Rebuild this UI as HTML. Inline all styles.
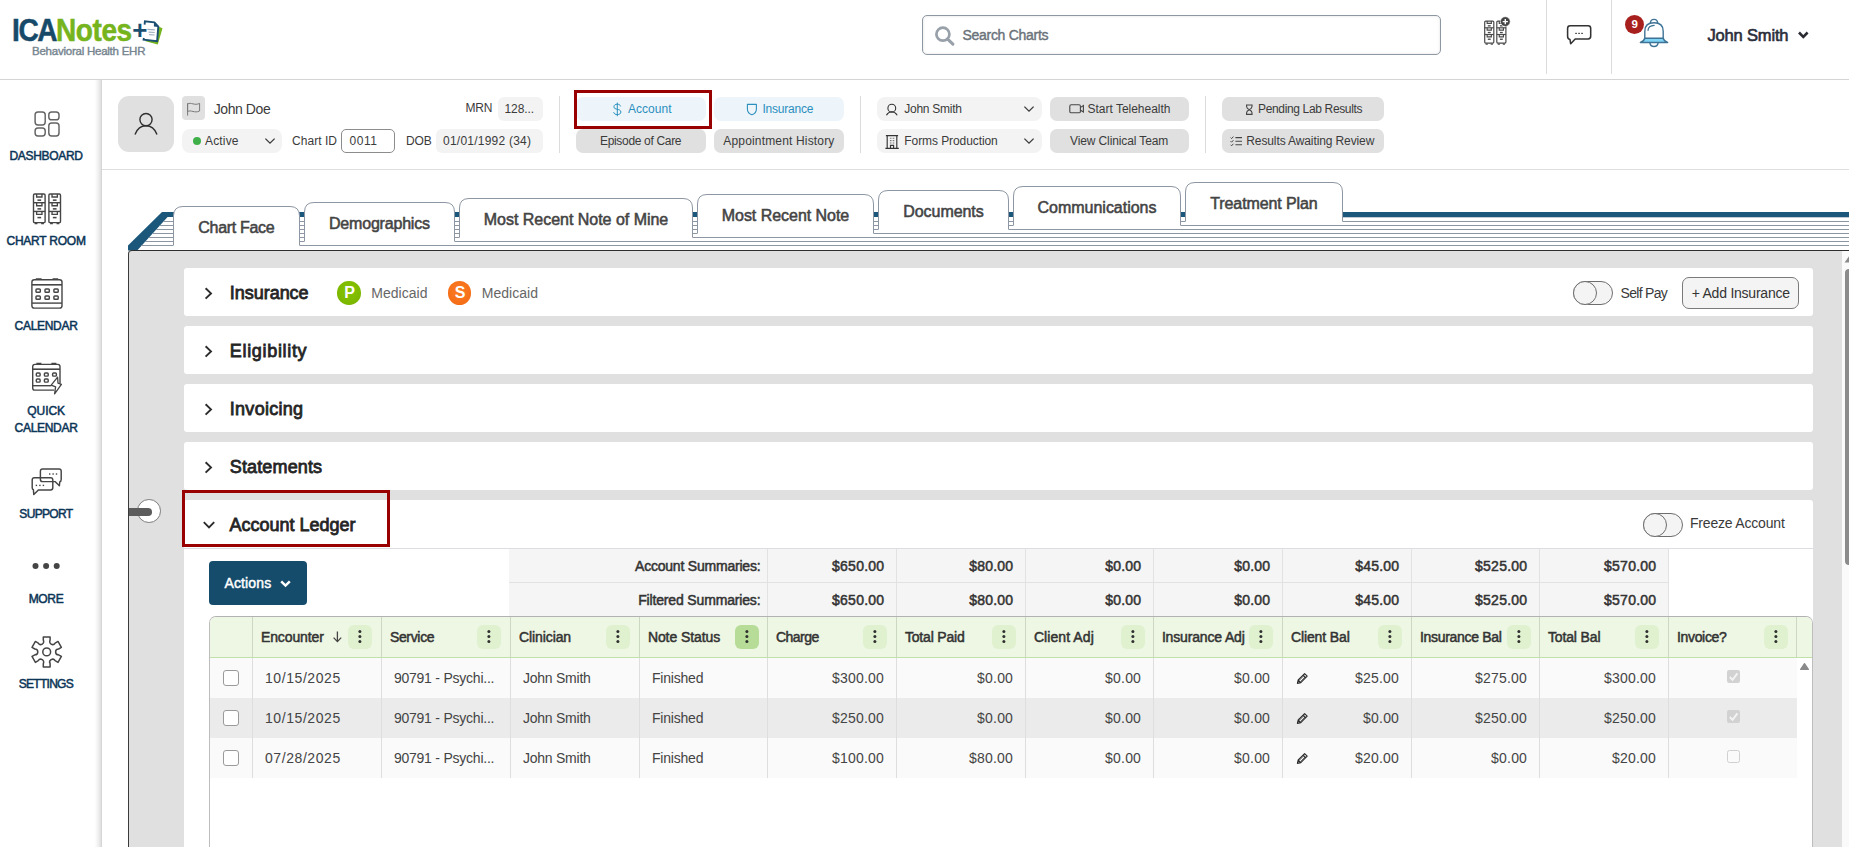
<!DOCTYPE html>
<html lang="en"><head><meta charset="utf-8"><title>ICANotes - Account Ledger</title>
<style>
html,body{margin:0;padding:0;}
body{width:1849px;height:847px;overflow:hidden;background:#fff;position:relative;font-family:"Liberation Sans",sans-serif;}
.b{position:absolute;box-sizing:border-box;}
.t{position:absolute;white-space:nowrap;font-family:"Liberation Sans",sans-serif;}
svg{overflow:visible;}
</style></head><body>
<header>
<div class="b" style="left:0px;top:79px;width:1849px;height:1px;background:#d4d4d4;"></div>
<span class="t" style="left:11.60px;top:15.18px;font-size:30.5px;line-height:30.5px;font-weight:700;color:#174a69;letter-spacing:-1.481px;-webkit-text-stroke:.5px #174a69;transform:scaleX(0.92);transform-origin:0 0;">ICA</span>
<span class="t" style="left:56.40px;top:15.18px;font-size:30.5px;line-height:30.5px;font-weight:700;color:#76b41d;letter-spacing:-0.479px;-webkit-text-stroke:.5px #76b41d;transform:scaleX(0.92);transform-origin:0 0;">Notes</span>
<svg class="b" style="left:0px;top:0px;" width="180" height="60" viewBox="0 0 180 60">
<path d="M158.3 26.6 L162.5 28.2 L157.8 44.6 L145.6 41.3 L146 39.6 L157 41 Z" fill="#76b41d"/>
<path d="M144.6 24.6 L144.9 21.4 L154.4 22.3 L158.3 26.7 L157.1 41.1 L143.6 39.6 L143.9 38" fill="#fff" stroke="#1a4f72" stroke-width="1.9" stroke-linejoin="miter"/>
<path d="M154 22 L158.6 27 L153.9 26.6 Z" fill="#1a4f72"/>
<path d="M147.4 29.4 L154.8 29.9 M148.6 32.1 L154.7 32.5 M149.1 34.6 L154.6 35" stroke="#9fb0c0" stroke-width="1.1"/>
</svg>
<span class="t" style="left:132.30px;top:16.89px;font-size:26px;line-height:26px;font-weight:700;color:#1a4f72;letter-spacing:0.016px;">+</span>
<span class="t" style="left:32.00px;top:46.37px;font-size:11.5px;line-height:11.5px;color:#76858f;letter-spacing:-0.238px;-webkit-text-stroke:0.4px #76858f;">Behavioral Health EHR</span>
<div class="b" style="left:922px;top:15px;width:519px;height:40px;border:1px solid #8d98a3;border-radius:5px;background:#fff;box-shadow:inset 0 0 3px rgba(0,0,0,.12);"></div>
<svg class="b" style="left:934px;top:25px;" width="22" height="22" viewBox="0 0 22 22"><circle cx="8.9" cy="9.2" r="6.5" fill="none" stroke="#98a0a9" stroke-width="2.7"/><path d="M13.9 14.3 L18.9 19.1" stroke="#98a0a9" stroke-width="3.1" stroke-linecap="round"/></svg>
<span class="t" style="left:962.50px;top:27.95px;font-size:14px;line-height:14px;color:#6a727a;letter-spacing:-0.290px;-webkit-text-stroke:0.4px #6a727a;">Search Charts</span>
<svg class="b" style="left:1476px;top:8px;" width="50" height="46" viewBox="0 0 50 46"><rect x="8.7" y="13.1" width="9.1" height="22.0" rx="1" fill="none" stroke="#4a4a4a" stroke-width="1.2"/><path d="M11.157 13.1 V15.41 H15.343 V13.1" fill="none" stroke="#4a4a4a" stroke-width="1.14"/><path d="M11.794 17.83 H14.706" stroke="#4a4a4a" stroke-width="1.32"/><path d="M8.7 19.81 H17.799999999999997" stroke="#4a4a4a" stroke-width="1.2"/><path d="M11.157 19.81 V22.119999999999997 H15.343 V19.81" fill="none" stroke="#4a4a4a" stroke-width="1.14"/><path d="M11.794 24.54 H14.706" stroke="#4a4a4a" stroke-width="1.32"/><path d="M8.7 26.52 H17.799999999999997" stroke="#4a4a4a" stroke-width="1.2"/><path d="M11.157 26.52 V28.83 H15.343 V26.52" fill="none" stroke="#4a4a4a" stroke-width="1.14"/><path d="M11.794 31.25 H14.706" stroke="#4a4a4a" stroke-width="1.32"/><path d="M9.61 36.1 h2.1839999999999997 M14.706 36.1 h2.1839999999999997" stroke="#4a4a4a" stroke-width="1.08"/><rect x="20.8" y="13.1" width="9.1" height="22.0" rx="1" fill="none" stroke="#4a4a4a" stroke-width="1.2"/><path d="M23.257 13.1 V15.41 H27.443 V13.1" fill="none" stroke="#4a4a4a" stroke-width="1.14"/><path d="M23.894000000000002 17.83 H26.806" stroke="#4a4a4a" stroke-width="1.32"/><path d="M20.8 19.81 H29.9" stroke="#4a4a4a" stroke-width="1.2"/><path d="M23.257 19.81 V22.119999999999997 H27.443 V19.81" fill="none" stroke="#4a4a4a" stroke-width="1.14"/><path d="M23.894000000000002 24.54 H26.806" stroke="#4a4a4a" stroke-width="1.32"/><path d="M20.8 26.52 H29.9" stroke="#4a4a4a" stroke-width="1.2"/><path d="M23.257 26.52 V28.83 H27.443 V26.52" fill="none" stroke="#4a4a4a" stroke-width="1.14"/><path d="M23.894000000000002 31.25 H26.806" stroke="#4a4a4a" stroke-width="1.32"/><path d="M21.71 36.1 h2.1839999999999997 M26.806 36.1 h2.1839999999999997" stroke="#4a4a4a" stroke-width="1.08"/><circle cx="29.3" cy="13.6" r="4.9" fill="#444" stroke="#fff" stroke-width="0.6"/><path d="M26.7 13.6 H31.9 M29.3 11 V16.2" stroke="#fff" stroke-width="1.4"/></svg>
<div class="b" style="left:1546px;top:0px;width:1px;height:74px;background:#dcdcdc;"></div>
<svg class="b" style="left:0px;top:0px;" width="1849" height="60" viewBox="0 0 1849 60"><path d="M1570.2 25.8 H1588.1 Q1590.7 25.8 1590.7 28.4 V36.3 Q1590.7 38.9 1588.1 38.9 H1575.2 L1570.7 43.8 L1570 39.6 Q1567.6 39 1567.6 36.3 V28.4 Q1567.6 25.8 1570.2 25.8 Z" fill="none" stroke="#333" stroke-width="1.55" stroke-linejoin="round"/><g fill="#333"><rect x="1575.3" y="32.8" width="1.5" height="1.2"/><rect x="1578.3" y="32.8" width="1.5" height="1.2"/><rect x="1581.3" y="32.8" width="1.5" height="1.2"/></g></svg>
<div class="b" style="left:1611px;top:0px;width:1px;height:74px;background:#dcdcdc;"></div>
<svg class="b" style="left:0px;top:0px;" width="1849" height="60" viewBox="0 0 1849 60"><g fill="none" stroke="#3f7396" stroke-width="1.4" stroke-linejoin="round" stroke-linecap="round">
<path d="M1644.8 38.2 H1663.2 C1663.8 40.4 1665.4 41.7 1667.6 42.5 H1640.4 C1642.6 41.7 1644.2 40.4 1644.8 38.2 Z" fill="#7fd3f4"/>
<path d="M1644.8 38.2 V31.2 C1644.8 25.6 1648.6 22.8 1654 22.8 C1659.4 22.8 1663.2 25.6 1663.2 31.2 V38.2"/>
<path d="M1650.4 23.3 C1650.4 20.5 1652 19.4 1654 19.4 C1656 19.4 1657.6 20.5 1657.6 23.3"/>
<path d="M1649.9 42.6 C1650.2 45.4 1651.8 46.5 1654 46.5 C1656.2 46.5 1657.8 45.4 1658.1 42.6"/>
<path d="M1648 30.4 C1648.2 27.6 1650.6 25.6 1654.2 25.4" stroke-width="1.2"/>
</g></svg>
<div class="b" style="left:1625px;top:14.8px;width:19px;height:19px;background:#a8201e;border-radius:50%;"></div>
<span class="t" style="left:1631.40px;top:19.17px;font-size:11.5px;line-height:11.5px;font-weight:700;color:#fff;letter-spacing:0.004px;">9</span>
<span class="t" style="left:1707.50px;top:26.83px;font-size:16.5px;line-height:16.5px;color:#2a2d3a;letter-spacing:-0.171px;-webkit-text-stroke:0.6px #2a2d3a;">John Smith</span>
<svg class="b" style="left:1797px;top:30px;" width="13" height="10" viewBox="0 0 13 10"><path d="M2 2.5 L6.3 6.8 L10.6 2.5" fill="none" stroke="#2a2b30" stroke-width="2.6"/></svg>
</header>
<nav>
<div class="b" style="left:0px;top:80px;width:102px;height:767px;background:linear-gradient(to right,#fff 0,#fff 94.5px,#fafafa 96px,#ececec 99px,#dedede 101px,#cecece 102px);"></div>
<svg class="b" style="left:0px;top:0px;" width="102" height="847" viewBox="0 0 102 847"><g fill="none" stroke="#636363" stroke-width="1.45"><rect x="35.1" y="111.9" width="10.1" height="13.1" rx="2.9"/><rect x="48.8" y="111.9" width="10.2" height="7.9" rx="2.9"/><rect x="35.1" y="128" width="10.1" height="7.9" rx="2.9"/><rect x="48.8" y="122.9" width="10.2" height="13" rx="2.9"/></g><rect x="33.5" y="194.0" width="11.6" height="28.6" rx="1.2" fill="none" stroke="#454545" stroke-width="1.4"/><path d="M36.632 194.0 V197.003 H41.968 V194.0" fill="none" stroke="#454545" stroke-width="1.3299999999999998"/><path d="M37.444 200.149 H41.156" stroke="#454545" stroke-width="1.54"/><path d="M33.5 202.723 H45.1" stroke="#454545" stroke-width="1.4"/><path d="M36.632 202.723 V205.726 H41.968 V202.723" fill="none" stroke="#454545" stroke-width="1.3299999999999998"/><path d="M37.444 208.872 H41.156" stroke="#454545" stroke-width="1.54"/><path d="M33.5 211.446 H45.1" stroke="#454545" stroke-width="1.4"/><path d="M36.632 211.446 V214.449 H41.968 V211.446" fill="none" stroke="#454545" stroke-width="1.3299999999999998"/><path d="M37.444 217.595 H41.156" stroke="#454545" stroke-width="1.54"/><path d="M34.66 223.7 h2.784 M41.156 223.7 h2.784" stroke="#454545" stroke-width="1.26"/><rect x="48.9" y="194.0" width="11.6" height="28.6" rx="1.2" fill="none" stroke="#454545" stroke-width="1.4"/><path d="M52.032 194.0 V197.003 H57.367999999999995 V194.0" fill="none" stroke="#454545" stroke-width="1.3299999999999998"/><path d="M52.844 200.149 H56.556" stroke="#454545" stroke-width="1.54"/><path d="M48.9 202.723 H60.5" stroke="#454545" stroke-width="1.4"/><path d="M52.032 202.723 V205.726 H57.367999999999995 V202.723" fill="none" stroke="#454545" stroke-width="1.3299999999999998"/><path d="M52.844 208.872 H56.556" stroke="#454545" stroke-width="1.54"/><path d="M48.9 211.446 H60.5" stroke="#454545" stroke-width="1.4"/><path d="M52.032 211.446 V214.449 H57.367999999999995 V211.446" fill="none" stroke="#454545" stroke-width="1.3299999999999998"/><path d="M52.844 217.595 H56.556" stroke="#454545" stroke-width="1.54"/><path d="M50.059999999999995 223.7 h2.784 M56.556 223.7 h2.784" stroke="#454545" stroke-width="1.26"/><g fill="none" stroke="#454545" stroke-width="1.4"><rect x="31.9" y="279.7" width="30.1" height="28.4" rx="2.4"/><path d="M31.9 284.8 H62" stroke-width="1.6"/><path d="M31.9 303.1 H62"/><path d="M35.8 278.9 H41.6 M52.6 278.9 H58.2" stroke-width="1.5"/><rect x="36.0" y="288.9" width="4.3" height="3.4" rx=".9" stroke-width="1.45"/><rect x="45.0" y="288.9" width="4.3" height="3.4" rx=".9" stroke-width="1.45"/><rect x="53.9" y="288.9" width="4.3" height="3.4" rx=".9" stroke-width="1.45"/><rect x="36.0" y="295.9" width="4.3" height="3.4" rx=".9" stroke-width="1.45"/><rect x="45.0" y="295.9" width="4.3" height="3.4" rx=".9" stroke-width="1.45"/><rect x="53.9" y="295.9" width="4.3" height="3.4" rx=".9" stroke-width="1.45"/></g><g fill="none" stroke="#454545" stroke-width="1.4"><path d="M54.2 390.1 H34.9 Q32.7 390.1 32.7 387.9 V366.6 Q32.7 364.4 34.9 364.4 H57.8 Q60 364.4 60 366.6 V383.6"/><path d="M32.7 369.2 H60" stroke-width="1.6"/><path d="M32.7 385.7 H51.4"/><path d="M36.4 363.6 H41.4 M51.4 363.6 H56.4" stroke-width="1.5"/><rect x="36.3" y="373.0" width="3.8" height="3.1" rx=".9" stroke-width="1.45"/><rect x="44.4" y="373.0" width="3.8" height="3.1" rx=".9" stroke-width="1.45"/><rect x="52.6" y="373.0" width="3.8" height="3.1" rx=".9" stroke-width="1.45"/><rect x="36.3" y="379.0" width="3.8" height="3.1" rx=".9" stroke-width="1.45"/><rect x="44.4" y="379.0" width="3.8" height="3.1" rx=".9" stroke-width="1.45"/><path d="M57.6 377.2 L51.2 385.2 L55.6 386.9 L54.6 393.9 L61.4 384.4 L58 383.2 Z" fill="#fff" stroke-linejoin="round" stroke-width="1.3"/></g><g fill="none" stroke="#454545" stroke-width="1.45" stroke-linejoin="round"><path d="M42.6 469 H59 Q61.2 469 61.2 471.2 V479.6 Q61.2 481.6 59.8 481.8 L59.4 485.8 L55 481.6 H42.6 Q40.4 481.6 40.4 479.4 V471.2 Q40.4 469 42.6 469 Z"/><path d="M34.4 477.7 H50.6 Q52.8 477.7 52.8 479.9 V487.7 Q52.8 489.9 50.6 489.9 H38.4 L33.8 494.6 L33.4 489.7 Q32.2 489.3 32.2 487.7 V479.9 Q32.2 477.7 34.4 477.7 Z"/></g><rect x="49.0" y="473.3" width="1.4" height="1.4" fill="#454545"/><rect x="52.4" y="473.3" width="1.4" height="1.4" fill="#454545"/><rect x="55.8" y="473.3" width="1.4" height="1.4" fill="#454545"/><rect x="35.699999999999996" y="484.7" width="1.4" height="1.4" fill="#454545"/><rect x="39.199999999999996" y="484.7" width="1.4" height="1.4" fill="#454545"/><rect x="42.699999999999996" y="484.7" width="1.4" height="1.4" fill="#454545"/><circle cx="35.5" cy="566" r="3" fill="#454545"/><circle cx="46.1" cy="566" r="3" fill="#454545"/><circle cx="56.7" cy="566" r="3" fill="#454545"/><path d="M43.30 640.20 L43.30 636.90 L50.10 636.90 L50.10 640.20 A2.75 2.75 0 0 0 55.13 643.11 L57.99 641.46 L61.39 647.34 L58.53 648.99 A2.75 2.75 0 0 0 58.53 654.81 L61.39 656.46 L57.99 662.34 L55.13 660.69 A2.75 2.75 0 0 0 50.10 663.60 L50.10 666.90 L43.30 666.90 L43.30 663.60 A2.75 2.75 0 0 0 38.27 660.69 L35.41 662.34 L32.01 656.46 L34.87 654.81 A2.75 2.75 0 0 0 34.87 648.99 L32.01 647.34 L35.41 641.46 L38.27 643.11 A2.75 2.75 0 0 0 43.30 640.20 Z" fill="none" stroke="#454545" stroke-width="1.5" stroke-linejoin="round"/><circle cx="46.7" cy="651.9" r="3.9" fill="none" stroke="#454545" stroke-width="1.5"/></svg>
<span class="t" style="left:9.50px;top:150.04px;font-size:12px;line-height:12px;color:#0b3557;letter-spacing:-0.327px;-webkit-text-stroke:0.5px #0b3557;">DASHBOARD</span>
<span class="t" style="left:6.50px;top:235.14px;font-size:12px;line-height:12px;color:#0b3557;letter-spacing:-0.240px;-webkit-text-stroke:0.5px #0b3557;">CHART ROOM</span>
<span class="t" style="left:14.60px;top:319.74px;font-size:12px;line-height:12px;color:#0b3557;letter-spacing:-0.307px;-webkit-text-stroke:0.5px #0b3557;">CALENDAR</span>
<span class="t" style="left:27.30px;top:404.64px;font-size:12px;line-height:12px;color:#0b3557;letter-spacing:-0.051px;-webkit-text-stroke:0.5px #0b3557;">QUICK</span>
<span class="t" style="left:14.60px;top:422.24px;font-size:12px;line-height:12px;color:#0b3557;letter-spacing:-0.307px;-webkit-text-stroke:0.5px #0b3557;">CALENDAR</span>
<span class="t" style="left:19.35px;top:507.74px;font-size:12px;line-height:12px;color:#0b3557;letter-spacing:-0.682px;-webkit-text-stroke:0.5px #0b3557;">SUPPORT</span>
<span class="t" style="left:28.65px;top:592.64px;font-size:12px;line-height:12px;color:#0b3557;letter-spacing:-0.300px;-webkit-text-stroke:0.5px #0b3557;">MORE</span>
<span class="t" style="left:18.65px;top:678.24px;font-size:12px;line-height:12px;color:#0b3557;letter-spacing:-0.701px;-webkit-text-stroke:0.5px #0b3557;">SETTINGS</span>
</nav>
<main>
<section>
<div class="b" style="left:102px;top:169px;width:1747px;height:1px;background:#dedede;"></div>
<div class="b" style="left:118px;top:96px;width:56px;height:56px;background:#e0e0e0;border-radius:11px;"></div>
<svg class="b" style="left:134px;top:111px;" width="24" height="26" viewBox="0 0 24 26"><circle cx="12" cy="8.6" r="6.1" fill="none" stroke="#2f2f2f" stroke-width="1.4"/><path d="M1 23.4 C3.4 17.4 8 14.8 12 14.8 C16 14.8 20.6 17.4 23 23.4" fill="none" stroke="#2f2f2f" stroke-width="1.4"/></svg>
<div class="b" style="left:182px;top:96px;width:23px;height:23.5px;background:#e0e0e0;border-radius:4px;"></div>
<svg class="b" style="left:185.5px;top:100.5px;" width="17" height="16" viewBox="0 0 17 16"><path d="M1.6 2.2 V14.6" stroke="#7a7a7a" stroke-width="1" fill="none"/><path d="M1.6 3 C5 0.8 8.4 5 13.6 2.4 V10 C8.6 12.6 5 8.4 1.6 10.6 Z" fill="none" stroke="#7a7a7a" stroke-width="1" stroke-linejoin="round"/></svg>
<span class="t" style="left:213.70px;top:101.95px;font-size:14px;line-height:14px;color:#3b3b3b;letter-spacing:-0.419px;">John Doe</span>
<span class="t" style="left:465.50px;top:101.84px;font-size:12px;line-height:12px;color:#3b3b3b;letter-spacing:-0.165px;">MRN</span>
<div class="b" style="left:497.5px;top:97px;width:45.5px;height:23.5px;background:#f3f3f3;border-radius:6px;"></div>
<span class="t" style="left:504.50px;top:103.04px;font-size:12px;line-height:12px;color:#3b3b3b;letter-spacing:-0.105px;">128...</span>
<div class="b" style="left:182px;top:129px;width:100px;height:23.5px;background:#f3f3f3;border-radius:8px;"></div>
<div class="b" style="left:193px;top:137px;width:8.4px;height:8.4px;background:#3fb049;border-radius:50%;"></div>
<span class="t" style="left:205.00px;top:135.24px;font-size:12px;line-height:12px;color:#3b3b3b;letter-spacing:0.164px;">Active</span>
<svg class="b" style="left:264px;top:136px;" width="12" height="10" viewBox="0 0 12 10"><path d="M1.4 2.6 L6 7.2 L10.6 2.6" fill="none" stroke="#3a3a3a" stroke-width="1.3"/></svg>
<span class="t" style="left:292.00px;top:135.24px;font-size:12px;line-height:12px;color:#3b3b3b;letter-spacing:0.046px;">Chart ID</span>
<div class="b" style="left:341.3px;top:129.2px;width:53.8px;height:23.6px;border:1px solid #8c8c8c;border-radius:5px;background:#fff;"></div>
<span class="t" style="left:349.50px;top:135.24px;font-size:12px;line-height:12px;color:#3b3b3b;letter-spacing:0.565px;">0011</span>
<span class="t" style="left:406.00px;top:135.24px;font-size:12px;line-height:12px;color:#3b3b3b;letter-spacing:-0.102px;">DOB</span>
<div class="b" style="left:436.3px;top:129px;width:106.7px;height:23.5px;background:#f3f3f3;border-radius:6px;"></div>
<span class="t" style="left:443.00px;top:135.24px;font-size:12px;line-height:12px;color:#3b3b3b;letter-spacing:0.233px;">01/01/1992 (34)</span>
<div class="b" style="left:559px;top:96px;width:1px;height:57px;background:#dcdcdc;"></div>
<div class="b" style="left:576.3px;top:97px;width:130px;height:23.7px;background:#eef5fa;border-radius:7px;"></div>
<svg class="b" style="left:612px;top:102px;" width="11" height="15" viewBox="0 0 11 15"><path d="M8.6 4.4 C8.2 2.8 6.8 2.2 5.2 2.2 C3.4 2.2 1.9 3.1 1.9 4.8 C1.9 8.2 8.9 6.4 8.9 10 C8.9 11.8 7.2 12.6 5.4 12.6 C3.6 12.6 2 11.9 1.6 10.2 M5.3 0.6 V14.2" fill="none" stroke="#2b8fbe" stroke-width="1"/></svg>
<span class="t" style="left:628.00px;top:103.04px;font-size:12px;line-height:12px;color:#2b8fbe;letter-spacing:0.023px;">Account</span>
<div class="b" style="left:574px;top:90px;width:138px;height:39px;border:3px solid #990000;"></div>
<div class="b" style="left:576.3px;top:129.3px;width:130px;height:23.6px;background:#e0e0e0;border-radius:7px;"></div>
<span class="t" style="left:600.00px;top:135.24px;font-size:12px;line-height:12px;color:#3b3b3b;letter-spacing:-0.325px;">Episode of Care</span>
<div class="b" style="left:714px;top:97px;width:130.3px;height:23.7px;background:#eef5fa;border-radius:7px;"></div>
<svg class="b" style="left:745.5px;top:102.5px;" width="12" height="13" viewBox="0 0 12 13"><path d="M1.4 1.4 H10.4 V6 C10.4 9.4 8.2 11 5.9 11.8 C3.6 11 1.4 9.4 1.4 6 Z" fill="none" stroke="#2b8fbe" stroke-width="1.1" stroke-linejoin="round"/></svg>
<span class="t" style="left:762.50px;top:103.04px;font-size:12px;line-height:12px;color:#2b8fbe;letter-spacing:-0.213px;">Insurance</span>
<div class="b" style="left:714px;top:129.3px;width:130.3px;height:23.6px;background:#e0e0e0;border-radius:7px;"></div>
<span class="t" style="left:723.30px;top:135.24px;font-size:12px;line-height:12px;color:#3b3b3b;letter-spacing:0.164px;">Appointment History</span>
<div class="b" style="left:860px;top:96px;width:1px;height:57px;background:#dcdcdc;"></div>
<div class="b" style="left:877.3px;top:97px;width:164.5px;height:23.7px;background:#f3f3f3;border-radius:8px;"></div>
<svg class="b" style="left:0px;top:0px;" width="1000" height="160" viewBox="0 0 1000 160"><g fill="none" stroke="#333" stroke-width="1.1"><circle cx="891.8" cy="108.2" r="3.9"/><path d="M886.4 115.2 C888 112.7 890 111.8 891.8 111.8 C893.6 111.8 895.6 112.7 897.2 115.2"/></g></svg>
<span class="t" style="left:904.30px;top:103.04px;font-size:12px;line-height:12px;color:#3b3b3b;letter-spacing:-0.270px;">John Smith</span>
<svg class="b" style="left:1022.5px;top:104px;" width="12" height="10" viewBox="0 0 12 10"><path d="M1.4 2.6 L6 7.2 L10.6 2.6" fill="none" stroke="#3a3a3a" stroke-width="1.3"/></svg>
<div class="b" style="left:877.3px;top:129.3px;width:164.5px;height:23.6px;background:#f3f3f3;border-radius:8px;"></div>
<svg class="b" style="left:0px;top:0px;" width="1000" height="160" viewBox="0 0 1000 160"><g fill="none" stroke="#333" stroke-width="1.15"><path d="M885.9 135.6 H898.1 M887.2 135.6 V148.4 M896.8 135.6 V148.4 M885.4 148.4 H898.8 M890.5 148.4 V145.4 H893.6 V148.4"/><path d="M889.9 138.2 h1.6 M892.7 138.2 h1.6 M889.9 140.6 h1.6 M892.7 140.6 h1.6 M889.9 143 h1.6 M892.7 143 h1.6" stroke="#777" stroke-width="1.1"/></g></svg>
<span class="t" style="left:904.30px;top:135.24px;font-size:12px;line-height:12px;color:#3b3b3b;letter-spacing:-0.080px;">Forms Production</span>
<svg class="b" style="left:1022.5px;top:136px;" width="12" height="10" viewBox="0 0 12 10"><path d="M1.4 2.6 L6 7.2 L10.6 2.6" fill="none" stroke="#3a3a3a" stroke-width="1.3"/></svg>
<div class="b" style="left:1050px;top:97px;width:139px;height:23.7px;background:#e0e0e0;border-radius:7px;"></div>
<svg class="b" style="left:1069px;top:104px;" width="16" height="10" viewBox="0 0 16 10"><rect x="0.8" y="0.8" width="10.6" height="8" rx="1.4" fill="none" stroke="#444" stroke-width="1.1"/><path d="M11.6 3.4 L14.4 1.6 V8 L11.6 6.2" fill="none" stroke="#444" stroke-width="1.1"/></svg>
<span class="t" style="left:1087.50px;top:103.04px;font-size:12px;line-height:12px;color:#3b3b3b;letter-spacing:-0.011px;">Start Telehealth</span>
<div class="b" style="left:1050px;top:129.3px;width:139px;height:23.6px;background:#e0e0e0;border-radius:7px;"></div>
<span class="t" style="left:1070.00px;top:135.24px;font-size:12px;line-height:12px;color:#3b3b3b;letter-spacing:-0.116px;">View Clinical Team</span>
<div class="b" style="left:1205px;top:96px;width:1px;height:57px;background:#dcdcdc;"></div>
<div class="b" style="left:1222px;top:97px;width:162.3px;height:23.7px;background:#e0e0e0;border-radius:7px;"></div>
<svg class="b" style="left:1244.5px;top:103.5px;" width="9" height="12" viewBox="0 0 9 12"><path d="M1 1 H7.6 M1 10.4 H7.6 M1.6 1 V2.6 Q1.6 4.4 4.3 5.7 Q7 7 7 8.8 V10.4 M7 1 V2.6 Q7 4.4 4.3 5.7 Q1.6 7 1.6 8.8 V10.4" fill="none" stroke="#444" stroke-width="1.1"/></svg>
<span class="t" style="left:1258.00px;top:103.04px;font-size:12px;line-height:12px;color:#3b3b3b;letter-spacing:-0.347px;">Pending Lab Results</span>
<div class="b" style="left:1222px;top:129.3px;width:162.3px;height:23.6px;background:#e0e0e0;border-radius:7px;"></div>
<svg class="b" style="left:1230px;top:136px;" width="13" height="11" viewBox="0 0 13 11"><path d="M5.4 1.6 H12 M5.4 5.2 H12 M5.4 8.8 H12" stroke="#444" stroke-width="1.1"/><path d="M0.6 1.6 L1.6 2.6 L3.4 0.6 M0.6 5.2 L1.6 6.2 L3.4 4.2 M0.6 8.8 L1.6 9.8 L3.4 7.8" fill="none" stroke="#444" stroke-width="1"/></svg>
<span class="t" style="left:1246.30px;top:135.24px;font-size:12px;line-height:12px;color:#3b3b3b;letter-spacing:-0.114px;">Results Awaiting Review</span>
</section>
<section>
<svg class="b" style="left:0px;top:0px;" width="1849" height="260" viewBox="0 0 1849 260"><rect x="162" y="212" width="1700" height="5" fill="#1b577a"/><rect x="1342.5" y="217" width="520" height="1" fill="#c4cad1"/><path d="M162 212 L173.5 212 L173.5 217 L167.6 217 L137.2 250.5 L128 250.5 L128 245.4 Z" fill="#1b577a"/><clipPath id="tri"><path d="M167.6 217 L173.5 217 L173.5 250 L137.2 250 Z"/></clipPath><g clip-path="url(#tri)"><path d="M128 221.5 H173.5" stroke="#8d97a3" stroke-width="1"/><path d="M128 225.5 H173.5" stroke="#8d97a3" stroke-width="1"/><path d="M128 229.5 H173.5" stroke="#8d97a3" stroke-width="1"/><path d="M128 233.5 H173.5" stroke="#8d97a3" stroke-width="1"/><path d="M128 237.5 H173.5" stroke="#8d97a3" stroke-width="1"/><path d="M128 241.5 H173.5" stroke="#8d97a3" stroke-width="1"/><path d="M128 245.5 H173.5" stroke="#8d97a3" stroke-width="1"/></g><path d="M299.5 245.5 H1862" stroke="#8d97a3" stroke-width="1"/><path d="M454.5 241.5 H1862" stroke="#8d97a3" stroke-width="1"/><path d="M692.5 237.5 H1862" stroke="#8d97a3" stroke-width="1"/><path d="M873.5 233.5 H1862" stroke="#8d97a3" stroke-width="1"/><path d="M1008.5 229.5 H1862" stroke="#8d97a3" stroke-width="1"/><path d="M1180.5 225.5 H1862" stroke="#8d97a3" stroke-width="1"/><path d="M1342.5 221.5 H1862" stroke="#8d97a3" stroke-width="1"/><path d="M299.5 221.5 H304.5" stroke="#8d97a3" stroke-width="1"/><path d="M299.5 225.5 H304.5" stroke="#8d97a3" stroke-width="1"/><path d="M299.5 229.5 H304.5" stroke="#8d97a3" stroke-width="1"/><path d="M299.5 233.5 H304.5" stroke="#8d97a3" stroke-width="1"/><path d="M299.5 237.5 H304.5" stroke="#8d97a3" stroke-width="1"/><path d="M299.5 241.5 H304.5" stroke="#8d97a3" stroke-width="1"/><path d="M454.5 221.5 H459.5" stroke="#8d97a3" stroke-width="1"/><path d="M454.5 225.5 H459.5" stroke="#8d97a3" stroke-width="1"/><path d="M454.5 229.5 H459.5" stroke="#8d97a3" stroke-width="1"/><path d="M454.5 233.5 H459.5" stroke="#8d97a3" stroke-width="1"/><path d="M454.5 237.5 H459.5" stroke="#8d97a3" stroke-width="1"/><path d="M692.5 221.5 H697.5" stroke="#8d97a3" stroke-width="1"/><path d="M692.5 225.5 H697.5" stroke="#8d97a3" stroke-width="1"/><path d="M692.5 229.5 H697.5" stroke="#8d97a3" stroke-width="1"/><path d="M692.5 233.5 H697.5" stroke="#8d97a3" stroke-width="1"/><path d="M873.5 221.5 H878.5" stroke="#8d97a3" stroke-width="1"/><path d="M873.5 225.5 H878.5" stroke="#8d97a3" stroke-width="1"/><path d="M873.5 229.5 H878.5" stroke="#8d97a3" stroke-width="1"/><path d="M1008.5 221.5 H1013.5" stroke="#8d97a3" stroke-width="1"/><path d="M1008.5 225.5 H1013.5" stroke="#8d97a3" stroke-width="1"/><path d="M1180.5 221.5 H1185.5" stroke="#8d97a3" stroke-width="1"/><path d="M173.5 250 V216.0 Q173.5 206.5 183.0 206.5 H290.0 Q299.5 206.5 299.5 216.0 V250 Z" fill="#fff"/><path d="M173.5 245.5 V216.0 Q173.5 206.5 183.0 206.5 H290.0 Q299.5 206.5 299.5 216.0 V245.5" fill="none" stroke="#8d97a3" stroke-width="1"/><path d="M304.5 245 V212.0 Q304.5 202.5 314.0 202.5 H445.0 Q454.5 202.5 454.5 212.0 V245 Z" fill="#fff"/><path d="M304.5 241.5 V212.0 Q304.5 202.5 314.0 202.5 H445.0 Q454.5 202.5 454.5 212.0 V241.5" fill="none" stroke="#8d97a3" stroke-width="1"/><path d="M459.5 241 V208.0 Q459.5 198.5 469.0 198.5 H683.0 Q692.5 198.5 692.5 208.0 V241 Z" fill="#fff"/><path d="M459.5 237.5 V208.0 Q459.5 198.5 469.0 198.5 H683.0 Q692.5 198.5 692.5 208.0 V237.5" fill="none" stroke="#8d97a3" stroke-width="1"/><path d="M697.5 237 V204.0 Q697.5 194.5 707.0 194.5 H864.0 Q873.5 194.5 873.5 204.0 V237 Z" fill="#fff"/><path d="M697.5 233.5 V204.0 Q697.5 194.5 707.0 194.5 H864.0 Q873.5 194.5 873.5 204.0 V233.5" fill="none" stroke="#8d97a3" stroke-width="1"/><path d="M878.5 233 V200.0 Q878.5 190.5 888.0 190.5 H999.0 Q1008.5 190.5 1008.5 200.0 V233 Z" fill="#fff"/><path d="M878.5 229.5 V200.0 Q878.5 190.5 888.0 190.5 H999.0 Q1008.5 190.5 1008.5 200.0 V229.5" fill="none" stroke="#8d97a3" stroke-width="1"/><path d="M1013.5 229 V196.0 Q1013.5 186.5 1023.0 186.5 H1171.0 Q1180.5 186.5 1180.5 196.0 V229 Z" fill="#fff"/><path d="M1013.5 225.5 V196.0 Q1013.5 186.5 1023.0 186.5 H1171.0 Q1180.5 186.5 1180.5 196.0 V225.5" fill="none" stroke="#8d97a3" stroke-width="1"/><path d="M1185.5 225 V192.0 Q1185.5 182.5 1195.0 182.5 H1333.0 Q1342.5 182.5 1342.5 192.0 V225 Z" fill="#fff"/><path d="M1185.5 221.5 V192.0 Q1185.5 182.5 1195.0 182.5 H1333.0 Q1342.5 182.5 1342.5 192.0 V221.5" fill="none" stroke="#8d97a3" stroke-width="1"/></svg>
<span class="t" style="left:198.35px;top:219.86px;font-size:16px;line-height:16px;color:#444;letter-spacing:-0.316px;-webkit-text-stroke:0.55px #444;">Chart Face</span>
<span class="t" style="left:329.00px;top:215.86px;font-size:16px;line-height:16px;color:#444;letter-spacing:-0.196px;-webkit-text-stroke:0.55px #444;">Demographics</span>
<span class="t" style="left:483.75px;top:211.86px;font-size:16px;line-height:16px;color:#444;letter-spacing:-0.020px;-webkit-text-stroke:0.55px #444;">Most Recent Note of Mine</span>
<span class="t" style="left:721.75px;top:207.86px;font-size:16px;line-height:16px;color:#444;letter-spacing:-0.037px;-webkit-text-stroke:0.55px #444;">Most Recent Note</span>
<span class="t" style="left:903.25px;top:203.86px;font-size:16px;line-height:16px;color:#444;letter-spacing:-0.053px;-webkit-text-stroke:0.55px #444;">Documents</span>
<span class="t" style="left:1037.50px;top:199.86px;font-size:16px;line-height:16px;color:#444;letter-spacing:-0.012px;-webkit-text-stroke:0.55px #444;">Communications</span>
<span class="t" style="left:1210.25px;top:195.86px;font-size:16px;line-height:16px;color:#444;letter-spacing:-0.099px;-webkit-text-stroke:0.55px #444;">Treatment Plan</span>
</section>
<section>
<div class="b" style="left:128px;top:250px;width:1722px;height:600px;background:#e0e0e0;border-left:1px solid #3a3a3a;border-top:1px solid #2e2e2e;border-top-left-radius:4px;"></div>
<div class="b" style="left:1842px;top:251px;width:7px;height:596px;background:#fafafa;"></div>
<svg class="b" style="left:1842px;top:254px;" width="7" height="10" viewBox="0 0 7 10"><path d="M2.6 8.6 L7.6 1.4 V8.6 Z" fill="#8a8a8a"/></svg>
<div class="b" style="left:1845px;top:268.5px;width:8px;height:296px;background:#8b8b8b;border-radius:4px;"></div>
<div class="b" style="left:184px;top:268px;width:1629px;height:48px;background:#fff;border-radius:3px;"></div>
<svg class="b" style="left:204px;top:286.7px;" width="10" height="13" viewBox="0 0 10 13"><path d="M1.6 1.2 L7 6.4 L1.6 11.6" fill="none" stroke="#2b2b2b" stroke-width="1.9"/></svg>
<span class="t" style="left:229.80px;top:283.56px;font-size:18px;line-height:18px;color:#252525;letter-spacing:-0.031px;-webkit-text-stroke:0.8px #252525;">Insurance</span>
<div class="b" style="left:184px;top:326px;width:1629px;height:48px;background:#fff;border-radius:3px;"></div>
<svg class="b" style="left:204px;top:344.7px;" width="10" height="13" viewBox="0 0 10 13"><path d="M1.6 1.2 L7 6.4 L1.6 11.6" fill="none" stroke="#2b2b2b" stroke-width="1.9"/></svg>
<span class="t" style="left:229.80px;top:341.56px;font-size:18px;line-height:18px;color:#252525;letter-spacing:0.677px;-webkit-text-stroke:0.8px #252525;">Eligibility</span>
<div class="b" style="left:184px;top:384px;width:1629px;height:48px;background:#fff;border-radius:3px;"></div>
<svg class="b" style="left:204px;top:402.7px;" width="10" height="13" viewBox="0 0 10 13"><path d="M1.6 1.2 L7 6.4 L1.6 11.6" fill="none" stroke="#2b2b2b" stroke-width="1.9"/></svg>
<span class="t" style="left:229.80px;top:399.56px;font-size:18px;line-height:18px;color:#252525;letter-spacing:0.282px;-webkit-text-stroke:0.8px #252525;">Invoicing</span>
<div class="b" style="left:184px;top:442px;width:1629px;height:48px;background:#fff;border-radius:3px;"></div>
<svg class="b" style="left:204px;top:460.7px;" width="10" height="13" viewBox="0 0 10 13"><path d="M1.6 1.2 L7 6.4 L1.6 11.6" fill="none" stroke="#2b2b2b" stroke-width="1.9"/></svg>
<span class="t" style="left:229.80px;top:457.56px;font-size:18px;line-height:18px;color:#252525;letter-spacing:0.139px;-webkit-text-stroke:0.8px #252525;">Statements</span>
<div class="b" style="left:337.2px;top:281.3px;width:23.6px;height:23.4px;background:radial-gradient(circle at 50% 40%,#86c400,#78b200);border-radius:50%;"></div>
<span class="t" style="left:344.20px;top:285.06px;font-size:16px;line-height:16px;font-weight:700;color:#fff;letter-spacing:-1.072px;">P</span>
<span class="t" style="left:371.30px;top:286.15px;font-size:14px;line-height:14px;color:#666;letter-spacing:0.024px;">Medicaid</span>
<div class="b" style="left:447.5px;top:281.3px;width:23.6px;height:23.4px;background:radial-gradient(circle at 50% 40%,#fb7a22,#f26a14);border-radius:50%;"></div>
<span class="t" style="left:454.80px;top:285.06px;font-size:16px;line-height:16px;font-weight:700;color:#fff;letter-spacing:-1.672px;">S</span>
<span class="t" style="left:481.80px;top:286.15px;font-size:14px;line-height:14px;color:#666;letter-spacing:0.024px;">Medicaid</span>
<div class="b" style="left:1573px;top:281px;width:40px;height:24px;background:#f4f4f4;border:1px solid #6e6e6e;border-radius:12px;"></div>
<div class="b" style="left:1573px;top:281px;width:24px;height:24px;background:#f4f4f4;border:1px solid #6e6e6e;border-radius:12px;"></div>
<span class="t" style="left:1620.50px;top:286.15px;font-size:14px;line-height:14px;color:#3a3a3a;letter-spacing:-0.691px;">Self Pay</span>
<div class="b" style="left:1682px;top:277px;width:117px;height:32px;background:#f4f4f4;border:1px solid #7a7a7a;border-radius:7px;"></div>
<span class="t" style="left:1691.70px;top:286.15px;font-size:14px;line-height:14px;color:#333;letter-spacing:-0.234px;">+ Add Insurance</span>
</section>
<section>
<div class="b" style="left:184px;top:500px;width:1629px;height:360px;background:#fff;border-radius:3px;"></div>
<div class="b" style="left:184px;top:548px;width:1629px;height:1px;background:#dcdde3;"></div>
<svg class="b" style="left:202px;top:519.5px;" width="14" height="11" viewBox="0 0 14 11"><path d="M1.8 2.2 L7 7.4 L12.2 2.2" fill="none" stroke="#2b2b2b" stroke-width="1.9"/></svg>
<span class="t" style="left:229.60px;top:515.96px;font-size:18px;line-height:18px;color:#252525;letter-spacing:-0.007px;-webkit-text-stroke:0.8px #252525;">Account Ledger</span>
<div class="b" style="left:182px;top:490px;width:208px;height:57px;border:3px solid #990000;"></div>
<div class="b" style="left:1643px;top:513px;width:40px;height:24px;background:#f4f4f4;border:1px solid #6e6e6e;border-radius:12px;"></div>
<div class="b" style="left:1643px;top:513px;width:24px;height:24px;background:#f4f4f4;border:1px solid #6e6e6e;border-radius:12px;"></div>
<span class="t" style="left:1690.00px;top:515.95px;font-size:14px;line-height:14px;color:#3a3a3a;letter-spacing:-0.191px;">Freeze Account</span>
<div class="b" style="left:137.3px;top:499px;width:23.7px;height:23.7px;background:#fff;border:1px solid #7c7c7c;border-radius:50%;"></div>
<div class="b" style="left:129px;top:508.2px;width:23px;height:7.6px;background:#5c5c5c;border-radius:0 3.8px 3.8px 0;"></div>
<div class="b" style="left:209px;top:561px;width:98px;height:44px;background:#154c6b;border-radius:4px;"></div>
<span class="t" style="left:224.40px;top:576.05px;font-size:14px;line-height:14px;color:#fff;letter-spacing:0.148px;-webkit-text-stroke:0.45px #fff;">Actions</span>
<svg class="b" style="left:279px;top:578.5px;" width="13" height="10" viewBox="0 0 13 10"><path d="M2.2 2.4 L6.5 6.6 L10.8 2.4" fill="none" stroke="#fff" stroke-width="2.5"/></svg>
<div class="b" style="left:509px;top:549px;width:1159.2px;height:67.5px;background:#f5f5f5;"></div>
<div class="b" style="left:509px;top:582px;width:1159.2px;height:1px;background:#e2e2e2;"></div>
<div class="b" style="left:767.0px;top:549px;width:1px;height:67.5px;background:#e2e2e2;"></div>
<div class="b" style="left:896.0px;top:549px;width:1px;height:67.5px;background:#e2e2e2;"></div>
<div class="b" style="left:1025.0px;top:549px;width:1px;height:67.5px;background:#e2e2e2;"></div>
<div class="b" style="left:1153.0px;top:549px;width:1px;height:67.5px;background:#e2e2e2;"></div>
<div class="b" style="left:1282.0px;top:549px;width:1px;height:67.5px;background:#e2e2e2;"></div>
<div class="b" style="left:1411.0px;top:549px;width:1px;height:67.5px;background:#e2e2e2;"></div>
<div class="b" style="left:1539.0px;top:549px;width:1px;height:67.5px;background:#e2e2e2;"></div>
<div class="b" style="left:1668.0px;top:549px;width:1px;height:67.5px;background:#e2e2e2;"></div>
<span class="t" style="left:635.00px;top:559.45px;font-size:14px;line-height:14px;color:#333;letter-spacing:-0.210px;-webkit-text-stroke:0.5px #333;">Account Summaries:</span>
<span class="t" style="left:832.06px;top:559.45px;font-size:14px;line-height:14px;color:#333;letter-spacing:0.240px;-webkit-text-stroke:0.5px #333;">$650.00</span>
<span class="t" style="left:969.18px;top:559.45px;font-size:14px;line-height:14px;color:#333;letter-spacing:0.221px;-webkit-text-stroke:0.5px #333;">$80.00</span>
<span class="t" style="left:1105.29px;top:559.45px;font-size:14px;line-height:14px;color:#333;letter-spacing:0.193px;-webkit-text-stroke:0.5px #333;">$0.00</span>
<span class="t" style="left:1234.29px;top:559.45px;font-size:14px;line-height:14px;color:#333;letter-spacing:0.193px;-webkit-text-stroke:0.5px #333;">$0.00</span>
<span class="t" style="left:1355.17px;top:559.45px;font-size:14px;line-height:14px;color:#333;letter-spacing:0.221px;-webkit-text-stroke:0.5px #333;">$45.00</span>
<span class="t" style="left:1475.05px;top:559.45px;font-size:14px;line-height:14px;color:#333;letter-spacing:0.240px;-webkit-text-stroke:0.5px #333;">$525.00</span>
<span class="t" style="left:1604.05px;top:559.45px;font-size:14px;line-height:14px;color:#333;letter-spacing:0.240px;-webkit-text-stroke:0.5px #333;">$570.00</span>
<span class="t" style="left:638.20px;top:593.05px;font-size:14px;line-height:14px;color:#333;letter-spacing:-0.159px;-webkit-text-stroke:0.5px #333;">Filtered Summaries:</span>
<span class="t" style="left:832.06px;top:593.05px;font-size:14px;line-height:14px;color:#333;letter-spacing:0.240px;-webkit-text-stroke:0.5px #333;">$650.00</span>
<span class="t" style="left:969.18px;top:593.05px;font-size:14px;line-height:14px;color:#333;letter-spacing:0.221px;-webkit-text-stroke:0.5px #333;">$80.00</span>
<span class="t" style="left:1105.29px;top:593.05px;font-size:14px;line-height:14px;color:#333;letter-spacing:0.193px;-webkit-text-stroke:0.5px #333;">$0.00</span>
<span class="t" style="left:1234.29px;top:593.05px;font-size:14px;line-height:14px;color:#333;letter-spacing:0.193px;-webkit-text-stroke:0.5px #333;">$0.00</span>
<span class="t" style="left:1355.17px;top:593.05px;font-size:14px;line-height:14px;color:#333;letter-spacing:0.221px;-webkit-text-stroke:0.5px #333;">$45.00</span>
<span class="t" style="left:1475.05px;top:593.05px;font-size:14px;line-height:14px;color:#333;letter-spacing:0.240px;-webkit-text-stroke:0.5px #333;">$525.00</span>
<span class="t" style="left:1604.05px;top:593.05px;font-size:14px;line-height:14px;color:#333;letter-spacing:0.240px;-webkit-text-stroke:0.5px #333;">$570.00</span>
<div class="b" style="left:209px;top:616px;width:1604px;height:240px;background:#fff;border:1px solid #bdbdbd;border-top-color:#b2b2b2;border-radius:7px 7px 0 0;"></div>
<div class="b" style="left:210px;top:617px;width:1602px;height:40px;background:#eef7e3;border-radius:6px 6px 0 0;"></div>
<div class="b" style="left:210px;top:657px;width:1602px;height:1px;background:#c2e0aa;"></div>
<div class="b" style="left:252.0px;top:617px;width:1px;height:40px;background:#ccd8c2;"></div>
<div class="b" style="left:381.0px;top:617px;width:1px;height:40px;background:#ccd8c2;"></div>
<div class="b" style="left:510.0px;top:617px;width:1px;height:40px;background:#ccd8c2;"></div>
<div class="b" style="left:639.0px;top:617px;width:1px;height:40px;background:#ccd8c2;"></div>
<div class="b" style="left:767.0px;top:617px;width:1px;height:40px;background:#ccd8c2;"></div>
<div class="b" style="left:896.0px;top:617px;width:1px;height:40px;background:#ccd8c2;"></div>
<div class="b" style="left:1025.0px;top:617px;width:1px;height:40px;background:#ccd8c2;"></div>
<div class="b" style="left:1153.0px;top:617px;width:1px;height:40px;background:#ccd8c2;"></div>
<div class="b" style="left:1282.0px;top:617px;width:1px;height:40px;background:#ccd8c2;"></div>
<div class="b" style="left:1411.0px;top:617px;width:1px;height:40px;background:#ccd8c2;"></div>
<div class="b" style="left:1539.0px;top:617px;width:1px;height:40px;background:#ccd8c2;"></div>
<div class="b" style="left:1668.0px;top:617px;width:1px;height:40px;background:#ccd8c2;"></div>
<div class="b" style="left:1796.0px;top:617px;width:1px;height:40px;background:#ccd8c2;"></div>
<span class="t" style="left:260.90px;top:630.15px;font-size:14px;line-height:14px;color:#333;letter-spacing:-0.098px;-webkit-text-stroke:0.5px #333;">Encounter</span>
<div class="b" style="left:348.1px;top:625px;width:24px;height:24px;background:#dff1cf;border-radius:6px;"></div>
<svg class="b" style="left:348.1px;top:625px;" width="24" height="24" viewBox="0 0 24 24"><circle cx="11.9" cy="6.5" r="1.5" fill="#303030"/><circle cx="11.9" cy="11.5" r="1.5" fill="#303030"/><circle cx="11.9" cy="16.5" r="1.5" fill="#303030"/></svg>
<span class="t" style="left:389.90px;top:630.15px;font-size:14px;line-height:14px;color:#333;letter-spacing:-0.327px;-webkit-text-stroke:0.5px #333;">Service</span>
<div class="b" style="left:477.1px;top:625px;width:24px;height:24px;background:#dff1cf;border-radius:6px;"></div>
<svg class="b" style="left:477.1px;top:625px;" width="24" height="24" viewBox="0 0 24 24"><circle cx="11.9" cy="6.5" r="1.5" fill="#303030"/><circle cx="11.9" cy="11.5" r="1.5" fill="#303030"/><circle cx="11.9" cy="16.5" r="1.5" fill="#303030"/></svg>
<span class="t" style="left:518.90px;top:630.15px;font-size:14px;line-height:14px;color:#333;letter-spacing:-0.082px;-webkit-text-stroke:0.5px #333;">Clinician</span>
<div class="b" style="left:606.1px;top:625px;width:24px;height:24px;background:#dff1cf;border-radius:6px;"></div>
<svg class="b" style="left:606.1px;top:625px;" width="24" height="24" viewBox="0 0 24 24"><circle cx="11.9" cy="6.5" r="1.5" fill="#303030"/><circle cx="11.9" cy="11.5" r="1.5" fill="#303030"/><circle cx="11.9" cy="16.5" r="1.5" fill="#303030"/></svg>
<span class="t" style="left:647.90px;top:630.15px;font-size:14px;line-height:14px;color:#333;letter-spacing:-0.091px;-webkit-text-stroke:0.5px #333;">Note Status</span>
<div class="b" style="left:735.1px;top:625px;width:24px;height:24px;background:#b6dc97;border-radius:6px;"></div>
<svg class="b" style="left:735.1px;top:625px;" width="24" height="24" viewBox="0 0 24 24"><circle cx="11.9" cy="6.5" r="1.5" fill="#303030"/><circle cx="11.9" cy="11.5" r="1.5" fill="#303030"/><circle cx="11.9" cy="16.5" r="1.5" fill="#303030"/></svg>
<span class="t" style="left:775.90px;top:630.15px;font-size:14px;line-height:14px;color:#333;letter-spacing:-0.487px;-webkit-text-stroke:0.5px #333;">Charge</span>
<div class="b" style="left:863.1px;top:625px;width:24px;height:24px;background:#dff1cf;border-radius:6px;"></div>
<svg class="b" style="left:863.1px;top:625px;" width="24" height="24" viewBox="0 0 24 24"><circle cx="11.9" cy="6.5" r="1.5" fill="#303030"/><circle cx="11.9" cy="11.5" r="1.5" fill="#303030"/><circle cx="11.9" cy="16.5" r="1.5" fill="#303030"/></svg>
<span class="t" style="left:904.90px;top:630.15px;font-size:14px;line-height:14px;color:#333;letter-spacing:-0.170px;-webkit-text-stroke:0.5px #333;">Total Paid</span>
<div class="b" style="left:992.1px;top:625px;width:24px;height:24px;background:#dff1cf;border-radius:6px;"></div>
<svg class="b" style="left:992.1px;top:625px;" width="24" height="24" viewBox="0 0 24 24"><circle cx="11.9" cy="6.5" r="1.5" fill="#303030"/><circle cx="11.9" cy="11.5" r="1.5" fill="#303030"/><circle cx="11.9" cy="16.5" r="1.5" fill="#303030"/></svg>
<span class="t" style="left:1033.90px;top:630.15px;font-size:14px;line-height:14px;color:#333;letter-spacing:0.081px;-webkit-text-stroke:0.5px #333;">Client Adj</span>
<div class="b" style="left:1121.1px;top:625px;width:24px;height:24px;background:#dff1cf;border-radius:6px;"></div>
<svg class="b" style="left:1121.1px;top:625px;" width="24" height="24" viewBox="0 0 24 24"><circle cx="11.9" cy="6.5" r="1.5" fill="#303030"/><circle cx="11.9" cy="11.5" r="1.5" fill="#303030"/><circle cx="11.9" cy="16.5" r="1.5" fill="#303030"/></svg>
<span class="t" style="left:1161.90px;top:630.15px;font-size:14px;line-height:14px;color:#333;letter-spacing:-0.156px;-webkit-text-stroke:0.5px #333;">Insurance Adj</span>
<div class="b" style="left:1249.1px;top:625px;width:24px;height:24px;background:#dff1cf;border-radius:6px;"></div>
<svg class="b" style="left:1249.1px;top:625px;" width="24" height="24" viewBox="0 0 24 24"><circle cx="11.9" cy="6.5" r="1.5" fill="#303030"/><circle cx="11.9" cy="11.5" r="1.5" fill="#303030"/><circle cx="11.9" cy="16.5" r="1.5" fill="#303030"/></svg>
<span class="t" style="left:1290.90px;top:630.15px;font-size:14px;line-height:14px;color:#333;letter-spacing:-0.105px;-webkit-text-stroke:0.5px #333;">Client Bal</span>
<div class="b" style="left:1378.1px;top:625px;width:24px;height:24px;background:#dff1cf;border-radius:6px;"></div>
<svg class="b" style="left:1378.1px;top:625px;" width="24" height="24" viewBox="0 0 24 24"><circle cx="11.9" cy="6.5" r="1.5" fill="#303030"/><circle cx="11.9" cy="11.5" r="1.5" fill="#303030"/><circle cx="11.9" cy="16.5" r="1.5" fill="#303030"/></svg>
<span class="t" style="left:1419.90px;top:630.15px;font-size:14px;line-height:14px;color:#333;letter-spacing:-0.295px;-webkit-text-stroke:0.5px #333;">Insurance Bal</span>
<div class="b" style="left:1507.1px;top:625px;width:24px;height:24px;background:#dff1cf;border-radius:6px;"></div>
<svg class="b" style="left:1507.1px;top:625px;" width="24" height="24" viewBox="0 0 24 24"><circle cx="11.9" cy="6.5" r="1.5" fill="#303030"/><circle cx="11.9" cy="11.5" r="1.5" fill="#303030"/><circle cx="11.9" cy="16.5" r="1.5" fill="#303030"/></svg>
<span class="t" style="left:1547.90px;top:630.15px;font-size:14px;line-height:14px;color:#333;letter-spacing:-0.125px;-webkit-text-stroke:0.5px #333;">Total Bal</span>
<div class="b" style="left:1635.1px;top:625px;width:24px;height:24px;background:#dff1cf;border-radius:6px;"></div>
<svg class="b" style="left:1635.1px;top:625px;" width="24" height="24" viewBox="0 0 24 24"><circle cx="11.9" cy="6.5" r="1.5" fill="#303030"/><circle cx="11.9" cy="11.5" r="1.5" fill="#303030"/><circle cx="11.9" cy="16.5" r="1.5" fill="#303030"/></svg>
<span class="t" style="left:1676.90px;top:630.15px;font-size:14px;line-height:14px;color:#333;letter-spacing:-0.311px;-webkit-text-stroke:0.5px #333;">Invoice?</span>
<div class="b" style="left:1764.1px;top:625px;width:24px;height:24px;background:#dff1cf;border-radius:6px;"></div>
<svg class="b" style="left:1764.1px;top:625px;" width="24" height="24" viewBox="0 0 24 24"><circle cx="11.9" cy="6.5" r="1.5" fill="#303030"/><circle cx="11.9" cy="11.5" r="1.5" fill="#303030"/><circle cx="11.9" cy="16.5" r="1.5" fill="#303030"/></svg>
<svg class="b" style="left:331.5px;top:630px;" width="11" height="14" viewBox="0 0 11 14"><path d="M5.4 1.6 V11.4 M1.6 7.6 L5.4 11.6 L9.2 7.6" fill="none" stroke="#444" stroke-width="1.3"/></svg>
<div class="b" style="left:210px;top:658px;width:1586.5px;height:40px;background:#fafafa;"></div>
<div class="b" style="left:252.0px;top:658px;width:1px;height:40px;background:#dedede;"></div>
<div class="b" style="left:381.0px;top:658px;width:1px;height:40px;background:#dedede;"></div>
<div class="b" style="left:510.0px;top:658px;width:1px;height:40px;background:#dedede;"></div>
<div class="b" style="left:639.0px;top:658px;width:1px;height:40px;background:#dedede;"></div>
<div class="b" style="left:767.0px;top:658px;width:1px;height:40px;background:#dedede;"></div>
<div class="b" style="left:896.0px;top:658px;width:1px;height:40px;background:#dedede;"></div>
<div class="b" style="left:1025.0px;top:658px;width:1px;height:40px;background:#dedede;"></div>
<div class="b" style="left:1153.0px;top:658px;width:1px;height:40px;background:#dedede;"></div>
<div class="b" style="left:1282.0px;top:658px;width:1px;height:40px;background:#dedede;"></div>
<div class="b" style="left:1411.0px;top:658px;width:1px;height:40px;background:#dedede;"></div>
<div class="b" style="left:1539.0px;top:658px;width:1px;height:40px;background:#dedede;"></div>
<div class="b" style="left:1668.0px;top:658px;width:1px;height:40px;background:#dedede;"></div>
<div class="b" style="left:223px;top:670.4px;width:16px;height:16px;background:#fff;border:1px solid #9a9a9a;border-radius:3px;"></div>
<span class="t" style="left:264.90px;top:671.35px;font-size:14px;line-height:14px;color:#444;letter-spacing:0.592px;">10/15/2025</span>
<span class="t" style="left:393.90px;top:671.35px;font-size:14px;line-height:14px;color:#444;letter-spacing:-0.230px;">90791 - Psychi...</span>
<span class="t" style="left:522.90px;top:671.35px;font-size:14px;line-height:14px;color:#444;letter-spacing:-0.231px;">John Smith</span>
<span class="t" style="left:651.90px;top:671.35px;font-size:14px;line-height:14px;color:#444;letter-spacing:-0.199px;">Finished</span>
<span class="t" style="left:831.88px;top:671.35px;font-size:14px;line-height:14px;color:#444;letter-spacing:0.236px;">$300.00</span>
<span class="t" style="left:977.12px;top:671.35px;font-size:14px;line-height:14px;color:#444;letter-spacing:0.187px;">$0.00</span>
<span class="t" style="left:1105.12px;top:671.35px;font-size:14px;line-height:14px;color:#444;letter-spacing:0.187px;">$0.00</span>
<span class="t" style="left:1234.12px;top:671.35px;font-size:14px;line-height:14px;color:#444;letter-spacing:0.187px;">$0.00</span>
<span class="t" style="left:1355.00px;top:671.35px;font-size:14px;line-height:14px;color:#444;letter-spacing:0.217px;">$25.00</span>
<span class="t" style="left:1474.88px;top:671.35px;font-size:14px;line-height:14px;color:#444;letter-spacing:0.236px;">$275.00</span>
<span class="t" style="left:1603.88px;top:671.35px;font-size:14px;line-height:14px;color:#444;letter-spacing:0.236px;">$300.00</span>
<svg class="b" style="left:1296px;top:671.6px;" width="13" height="13" viewBox="0 0 13 13"><path d="M1.4 11.4 L2.2 8 L8.6 1.6 L11.2 4.2 L4.8 10.6 Z M7 3.2 L9.6 5.8 M2.2 8 L4.8 10.6" fill="none" stroke="#2b2b2b" stroke-width="1.1" stroke-linejoin="round"/><path d="M3.4 8.2 L8.2 3.4 M4.6 9.4 L9.4 4.6" stroke="#2b2b2b" stroke-width=".7"/></svg>
<div class="b" style="left:1727.2px;top:670.2px;width:12.8px;height:12.6px;background:#d2d2d2;border-radius:2px;"></div>
<svg class="b" style="left:1727px;top:670px;" width="14" height="14" viewBox="0 0 14 14"><path d="M2.8 7 L5.6 9.8 L10.4 3.4" fill="none" stroke="#f4f4f4" stroke-width="1.9"/></svg>
<div class="b" style="left:210px;top:698px;width:1586.5px;height:40px;background:#ebebeb;"></div>
<div class="b" style="left:252.0px;top:698px;width:1px;height:40px;background:#dedede;"></div>
<div class="b" style="left:381.0px;top:698px;width:1px;height:40px;background:#dedede;"></div>
<div class="b" style="left:510.0px;top:698px;width:1px;height:40px;background:#dedede;"></div>
<div class="b" style="left:639.0px;top:698px;width:1px;height:40px;background:#dedede;"></div>
<div class="b" style="left:767.0px;top:698px;width:1px;height:40px;background:#dedede;"></div>
<div class="b" style="left:896.0px;top:698px;width:1px;height:40px;background:#dedede;"></div>
<div class="b" style="left:1025.0px;top:698px;width:1px;height:40px;background:#dedede;"></div>
<div class="b" style="left:1153.0px;top:698px;width:1px;height:40px;background:#dedede;"></div>
<div class="b" style="left:1282.0px;top:698px;width:1px;height:40px;background:#dedede;"></div>
<div class="b" style="left:1411.0px;top:698px;width:1px;height:40px;background:#dedede;"></div>
<div class="b" style="left:1539.0px;top:698px;width:1px;height:40px;background:#dedede;"></div>
<div class="b" style="left:1668.0px;top:698px;width:1px;height:40px;background:#dedede;"></div>
<div class="b" style="left:223px;top:710.4px;width:16px;height:16px;background:#fff;border:1px solid #9a9a9a;border-radius:3px;"></div>
<span class="t" style="left:264.90px;top:711.35px;font-size:14px;line-height:14px;color:#444;letter-spacing:0.592px;">10/15/2025</span>
<span class="t" style="left:393.90px;top:711.35px;font-size:14px;line-height:14px;color:#444;letter-spacing:-0.230px;">90791 - Psychi...</span>
<span class="t" style="left:522.90px;top:711.35px;font-size:14px;line-height:14px;color:#444;letter-spacing:-0.231px;">John Smith</span>
<span class="t" style="left:651.90px;top:711.35px;font-size:14px;line-height:14px;color:#444;letter-spacing:-0.199px;">Finished</span>
<span class="t" style="left:831.88px;top:711.35px;font-size:14px;line-height:14px;color:#444;letter-spacing:0.236px;">$250.00</span>
<span class="t" style="left:977.12px;top:711.35px;font-size:14px;line-height:14px;color:#444;letter-spacing:0.187px;">$0.00</span>
<span class="t" style="left:1105.12px;top:711.35px;font-size:14px;line-height:14px;color:#444;letter-spacing:0.187px;">$0.00</span>
<span class="t" style="left:1234.12px;top:711.35px;font-size:14px;line-height:14px;color:#444;letter-spacing:0.187px;">$0.00</span>
<span class="t" style="left:1363.12px;top:711.35px;font-size:14px;line-height:14px;color:#444;letter-spacing:0.187px;">$0.00</span>
<span class="t" style="left:1474.88px;top:711.35px;font-size:14px;line-height:14px;color:#444;letter-spacing:0.236px;">$250.00</span>
<span class="t" style="left:1603.88px;top:711.35px;font-size:14px;line-height:14px;color:#444;letter-spacing:0.236px;">$250.00</span>
<svg class="b" style="left:1296px;top:711.6px;" width="13" height="13" viewBox="0 0 13 13"><path d="M1.4 11.4 L2.2 8 L8.6 1.6 L11.2 4.2 L4.8 10.6 Z M7 3.2 L9.6 5.8 M2.2 8 L4.8 10.6" fill="none" stroke="#2b2b2b" stroke-width="1.1" stroke-linejoin="round"/><path d="M3.4 8.2 L8.2 3.4 M4.6 9.4 L9.4 4.6" stroke="#2b2b2b" stroke-width=".7"/></svg>
<div class="b" style="left:1727.2px;top:710.2px;width:12.8px;height:12.6px;background:#d2d2d2;border-radius:2px;"></div>
<svg class="b" style="left:1727px;top:710px;" width="14" height="14" viewBox="0 0 14 14"><path d="M2.8 7 L5.6 9.8 L10.4 3.4" fill="none" stroke="#f4f4f4" stroke-width="1.9"/></svg>
<div class="b" style="left:210px;top:738px;width:1586.5px;height:39.6px;background:#fafafa;"></div>
<div class="b" style="left:252.0px;top:738px;width:1px;height:39.6px;background:#dedede;"></div>
<div class="b" style="left:381.0px;top:738px;width:1px;height:39.6px;background:#dedede;"></div>
<div class="b" style="left:510.0px;top:738px;width:1px;height:39.6px;background:#dedede;"></div>
<div class="b" style="left:639.0px;top:738px;width:1px;height:39.6px;background:#dedede;"></div>
<div class="b" style="left:767.0px;top:738px;width:1px;height:39.6px;background:#dedede;"></div>
<div class="b" style="left:896.0px;top:738px;width:1px;height:39.6px;background:#dedede;"></div>
<div class="b" style="left:1025.0px;top:738px;width:1px;height:39.6px;background:#dedede;"></div>
<div class="b" style="left:1153.0px;top:738px;width:1px;height:39.6px;background:#dedede;"></div>
<div class="b" style="left:1282.0px;top:738px;width:1px;height:39.6px;background:#dedede;"></div>
<div class="b" style="left:1411.0px;top:738px;width:1px;height:39.6px;background:#dedede;"></div>
<div class="b" style="left:1539.0px;top:738px;width:1px;height:39.6px;background:#dedede;"></div>
<div class="b" style="left:1668.0px;top:738px;width:1px;height:39.6px;background:#dedede;"></div>
<div class="b" style="left:223px;top:750.4px;width:16px;height:16px;background:#fff;border:1px solid #9a9a9a;border-radius:3px;"></div>
<span class="t" style="left:264.90px;top:751.35px;font-size:14px;line-height:14px;color:#444;letter-spacing:0.592px;">07/28/2025</span>
<span class="t" style="left:393.90px;top:751.35px;font-size:14px;line-height:14px;color:#444;letter-spacing:-0.230px;">90791 - Psychi...</span>
<span class="t" style="left:522.90px;top:751.35px;font-size:14px;line-height:14px;color:#444;letter-spacing:-0.231px;">John Smith</span>
<span class="t" style="left:651.90px;top:751.35px;font-size:14px;line-height:14px;color:#444;letter-spacing:-0.199px;">Finished</span>
<span class="t" style="left:831.88px;top:751.35px;font-size:14px;line-height:14px;color:#444;letter-spacing:0.236px;">$100.00</span>
<span class="t" style="left:969.00px;top:751.35px;font-size:14px;line-height:14px;color:#444;letter-spacing:0.217px;">$80.00</span>
<span class="t" style="left:1105.12px;top:751.35px;font-size:14px;line-height:14px;color:#444;letter-spacing:0.187px;">$0.00</span>
<span class="t" style="left:1234.12px;top:751.35px;font-size:14px;line-height:14px;color:#444;letter-spacing:0.187px;">$0.00</span>
<span class="t" style="left:1355.00px;top:751.35px;font-size:14px;line-height:14px;color:#444;letter-spacing:0.217px;">$20.00</span>
<span class="t" style="left:1491.12px;top:751.35px;font-size:14px;line-height:14px;color:#444;letter-spacing:0.187px;">$0.00</span>
<span class="t" style="left:1612.00px;top:751.35px;font-size:14px;line-height:14px;color:#444;letter-spacing:0.217px;">$20.00</span>
<svg class="b" style="left:1296px;top:751.6px;" width="13" height="13" viewBox="0 0 13 13"><path d="M1.4 11.4 L2.2 8 L8.6 1.6 L11.2 4.2 L4.8 10.6 Z M7 3.2 L9.6 5.8 M2.2 8 L4.8 10.6" fill="none" stroke="#2b2b2b" stroke-width="1.1" stroke-linejoin="round"/><path d="M3.4 8.2 L8.2 3.4 M4.6 9.4 L9.4 4.6" stroke="#2b2b2b" stroke-width=".7"/></svg>
<div class="b" style="left:1727.2px;top:750.2px;width:12.8px;height:12.6px;background:#fafafa;border:1px solid #d0d0d0;border-radius:2.5px;"></div>
<svg class="b" style="left:1799px;top:662px;" width="12" height="9" viewBox="0 0 12 9"><path d="M1.6 7.4 L5.5 1.6 L9.4 7.4 Z" fill="#8a8a8a" stroke="#8a8a8a" stroke-width="1.2" stroke-linejoin="round"/></svg>
</section>
</main>
</body></html>
